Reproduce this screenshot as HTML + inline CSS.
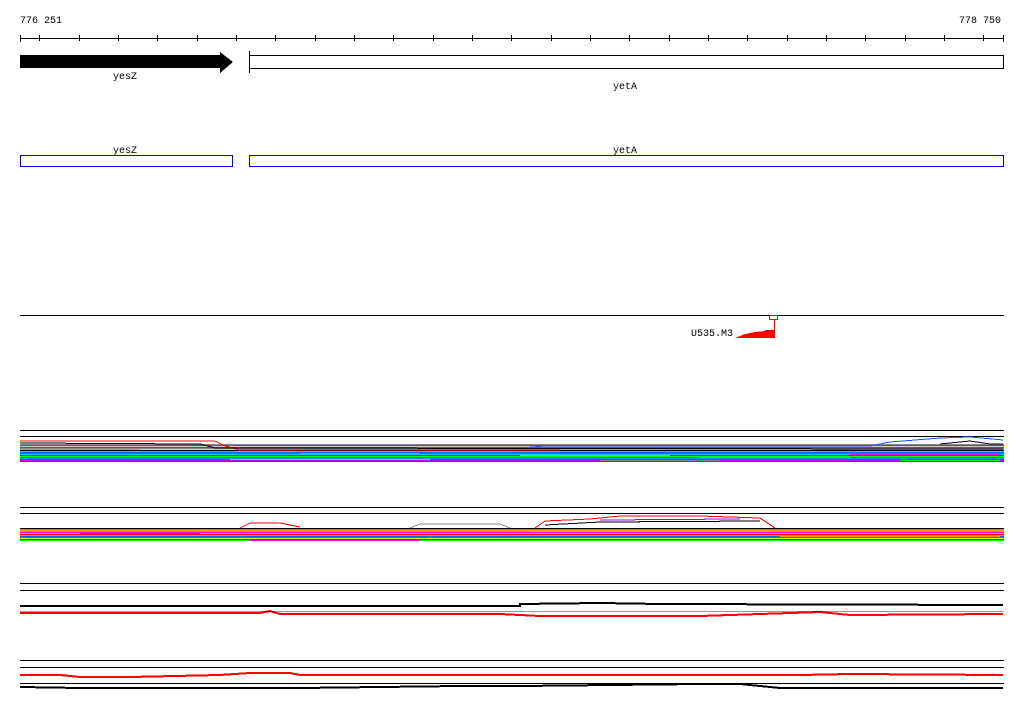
<!DOCTYPE html>
<html><head><meta charset="utf-8"><style>
html,body{margin:0;padding:0;background:#fff;width:1024px;height:714px;overflow:hidden}
svg{display:block}
text{font-family:"Liberation Mono","DejaVu Sans Mono",monospace;font-size:10px;fill:#000}
</style></head><body>
<svg width="1024" height="714" viewBox="0 0 1024 714" xmlns="http://www.w3.org/2000/svg" shape-rendering="crispEdges">
<text x="20" y="23">776 251</text>
<text x="959" y="23">778 750</text>
<!-- ruler -->
<line x1="20" y1="38.5" x2="1004" y2="38.5" stroke="#000"/>
<g stroke="#000">
<line x1="20.5" y1="35" x2="20.5" y2="42"/>
<line x1="1003.5" y1="35" x2="1003.5" y2="42"/>
<line x1="39.5" y1="35" x2="39.5" y2="41"/><line x1="79.5" y1="35" x2="79.5" y2="41"/><line x1="118.5" y1="35" x2="118.5" y2="41"/><line x1="157.5" y1="35" x2="157.5" y2="41"/><line x1="197.5" y1="35" x2="197.5" y2="41"/><line x1="236.5" y1="35" x2="236.5" y2="41"/><line x1="275.5" y1="35" x2="275.5" y2="41"/><line x1="315.5" y1="35" x2="315.5" y2="41"/><line x1="354.5" y1="35" x2="354.5" y2="41"/><line x1="393.5" y1="35" x2="393.5" y2="41"/><line x1="433.5" y1="35" x2="433.5" y2="41"/><line x1="472.5" y1="35" x2="472.5" y2="41"/><line x1="511.5" y1="35" x2="511.5" y2="41"/><line x1="551.5" y1="35" x2="551.5" y2="41"/><line x1="590.5" y1="35" x2="590.5" y2="41"/><line x1="629.5" y1="35" x2="629.5" y2="41"/><line x1="669.5" y1="35" x2="669.5" y2="41"/><line x1="708.5" y1="35" x2="708.5" y2="41"/><line x1="747.5" y1="35" x2="747.5" y2="41"/><line x1="787.5" y1="35" x2="787.5" y2="41"/><line x1="826.5" y1="35" x2="826.5" y2="41"/><line x1="865.5" y1="35" x2="865.5" y2="41"/><line x1="905.5" y1="35" x2="905.5" y2="41"/><line x1="944.5" y1="35" x2="944.5" y2="41"/><line x1="983.5" y1="35" x2="983.5" y2="41"/>
</g>
<!-- genes -->
<polygon points="20,55 220,55 220,52 233,62 220,73 220,68 20,68" fill="#000"/>
<text x="113" y="79">yesZ</text>
<line x1="249.5" y1="51" x2="249.5" y2="73" stroke="#000"/>
<rect x="249.5" y="55.5" width="754" height="13" fill="none" stroke="#000"/>
<text x="613" y="89">yetA</text>
<text x="113" y="153">yesZ</text>
<text x="613" y="153">yetA</text>
<rect x="20.5" y="155.5" width="212" height="11" fill="none" stroke="#00f"/>
<rect x="249.5" y="155.5" width="754" height="11" fill="none" stroke="#00f"/>
<!-- feature track -->
<line x1="20" y1="315.5" x2="1004" y2="315.5" stroke="#000"/>
<rect x="769.5" y="315.5" width="8" height="4" fill="none" stroke="#f00"/>
<line x1="774.5" y1="319" x2="774.5" y2="338" stroke="#f00"/>
<polygon points="735,338 774,338 774,330 765,330 765,331 755,332 745,334" fill="#f00"/>
<text x="691" y="336">U535.M3</text>
<!-- track borders -->
<g stroke="#000">
<line x1="20" y1="430.5" x2="1004" y2="430.5"/><line x1="20" y1="436.5" x2="1004" y2="436.5"/>
<line x1="20" y1="507.5" x2="1004" y2="507.5"/><line x1="20" y1="513.5" x2="1004" y2="513.5"/>
<line x1="20" y1="583.5" x2="1004" y2="583.5"/><line x1="20" y1="590.5" x2="1004" y2="590.5"/>
<line x1="20" y1="660.5" x2="1004" y2="660.5"/><line x1="20" y1="667.5" x2="1004" y2="667.5"/>
</g>
<!-- band 1 -->
<g>
<rect x="20" y="444" width="984" height="1" fill="#888"/>
<rect x="20" y="445" width="984" height="1" fill="#0066ff"/>
<rect x="20" y="446" width="984" height="1" fill="#ccc"/>
<rect x="20" y="447" width="984" height="1" fill="#0066ff"/>
<rect x="20" y="448" width="984" height="1" fill="#888"/>
<rect x="20" y="449" width="984" height="1" fill="#ff9900"/>
<rect x="20" y="450" width="984" height="1" fill="#000"/>
<rect x="20" y="451" width="984" height="1" fill="#999"/>
<rect x="20" y="452" width="984" height="1" fill="#0066ff"/>
<rect x="20" y="453" width="984" height="1" fill="#ff00ff"/>
<rect x="20" y="454" width="984" height="1" fill="#00ccff"/>
<rect x="20" y="455" width="984" height="1" fill="#9900ff"/>
<rect x="20" y="456" width="984" height="1" fill="#00ff00"/>
<rect x="20" y="457" width="984" height="1" fill="#ff00ff"/>
<rect x="20" y="458" width="984" height="1" fill="#0099ff"/>
<rect x="20" y="459" width="984" height="1" fill="#ff0066"/>
<rect x="20" y="460" width="984" height="1" fill="#cc00ff"/>
<rect x="20" y="461" width="984" height="1" fill="#ff0000"/>
<rect x="140" y="449" width="100" height="1" fill="#ccff00"/>
<rect x="300" y="453" width="120" height="1" fill="#00ff00"/>
<rect x="520" y="455" width="150" height="1" fill="#ff9900"/>
<rect x="700" y="457" width="150" height="1" fill="#00ff00"/>
<rect x="850" y="454" width="150" height="1" fill="#ff00ff"/>
<rect x="230" y="459" width="200" height="1" fill="#00ffff"/>
<rect x="600" y="460" width="120" height="1" fill="#888"/>
<rect x="900" y="460" width="100" height="1" fill="#00ff00"/>
</g>
<polyline points="20,441 215,441 225,446 240,450 560,450" fill="none" stroke="#f00"/>
<polyline points="520,448 545,446 870,446 890,442 940,438 970,437 1003,440" fill="none" stroke="#0066ff"/>
<polyline points="940,444 970,441 990,444 1003,444" fill="none" stroke="#000"/>
<polyline points="20,443 200,444 215,448 1003,449" fill="none" stroke="#000"/>
<!-- band 2 -->
<g>
<rect x="20" y="528" width="984" height="1" fill="#000"/>
<rect x="20" y="529" width="984" height="1" fill="#888"/>
<rect x="20" y="530" width="984" height="1" fill="#ff9900"/>
<rect x="20" y="531" width="984" height="1" fill="#00ccff"/>
<rect x="20" y="532" width="984" height="1" fill="#ff00ff"/>
<rect x="20" y="533" width="984" height="1" fill="#aaa"/>
<rect x="20" y="534" width="984" height="1" fill="#ff0000"/>
<rect x="20" y="535" width="984" height="1" fill="#00ff00"/>
<rect x="20" y="536" width="984" height="1" fill="#0066ff"/>
<rect x="20" y="537" width="984" height="1" fill="#ff00ff"/>
<rect x="20" y="538" width="984" height="1" fill="#ccff00"/>
<rect x="20" y="539" width="984" height="1" fill="#ff0000"/>
<rect x="20" y="540" width="984" height="1" fill="#00ff00"/>
<rect x="80" y="533" width="120" height="1" fill="#ff0066"/>
<rect x="530" y="531" width="240" height="1" fill="#00ffff"/>
<rect x="780" y="536" width="220" height="1" fill="#ff9900"/>
<rect x="250" y="540" width="170" height="1" fill="#ff00ff"/>
</g>
<polyline points="240,528 250,523 280,523 300,527" fill="none" stroke="#f00"/>
<polyline points="410,528 420,524 500,524 510,528" fill="none" stroke="#888"/>
<polyline points="535,528 545,521 590,519 620,516 700,516 760,518 775,528" fill="none" stroke="#f00"/>
<polyline points="545,525 600,522 760,521" fill="none" stroke="#000"/>
<polyline points="600,520 740,519" fill="none" stroke="#9900ff"/>
<!-- track 3 -->
<polyline points="20,606 225,606 520,606 520,604 600,603 660,604 1003,605" fill="none" stroke="#000" stroke-width="2"/>
<polyline points="20,613 260,613 270,611 280,614 500,614 540,616 700,616 760,614 820,612 850,615 1003,614" fill="none" stroke="#f00" stroke-width="2"/>
<line x1="20" y1="611.5" x2="1004" y2="611.5" stroke="#000" stroke-opacity=".4"/>
<!-- track 4 -->
<polyline points="20,675 60,675 80,677 130,677 220,675 250,673 290,673 300,675 800,675 850,674 1003,675" fill="none" stroke="#f00" stroke-width="2"/>
<line x1="20" y1="683.5" x2="1004" y2="683.5" stroke="#000"/>
<polyline points="20,687 80,688 120,688 300,688 460,686 520,686 700,684 740,684 780,688 1003,688" fill="none" stroke="#000" stroke-width="2"/>
</svg>
</body></html>
